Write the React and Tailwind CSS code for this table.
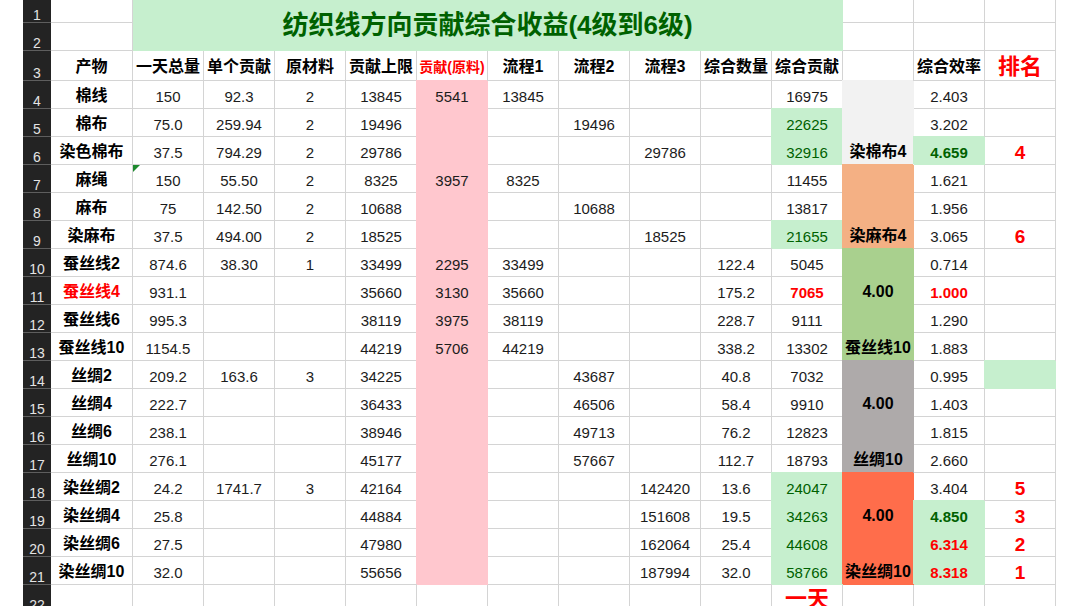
const fills = {
  pink: 'bg-[#ffc7ce] border-[#ffc7ce] shadow-[-1px_-1px_0_0_#ffc7ce]',
  good: 'bg-[#c6efce] border-[#c6efce] shadow-[-1px_-1px_0_0_#c6efce]',
  gray: 'bg-[#f2f2f2] border-[#f2f2f2] shadow-[-1px_-1px_0_0_#f2f2f2]',
  peach: 'bg-[#f4b084] border-[#f4b084] shadow-[-1px_-1px_0_0_#f4b084]',
  lime: 'bg-[#a9d08e] border-[#a9d08e] shadow-[-1px_-1px_0_0_#a9d08e]',
  stone: 'bg-[#aeaaaa] border-[#aeaaaa] shadow-[-1px_-1px_0_0_#aeaaaa]',
  coral: 'bg-[#ff6d4b] border-[#ff6d4b] shadow-[-1px_-1px_0_0_#ff6d4b]',
};

const styles = {
  num: 'text-[15px] text-[#1c1c1c]',
  name: 'text-[16px] font-bold text-black',
  head: 'text-[16px] font-bold text-black',
  redName: 'text-[16px] font-bold text-[#ff0000]',
  redHead: 'text-[14px] font-bold text-[#ff0000]',
  redBold: 'text-[15px] font-bold text-[#ff0000]',
  goodText: 'text-[15px] text-[#006100]',
  goodBold: 'text-[15px] font-bold text-[#006100]',
  bold: 'text-[16px] font-bold text-black',
  rank: 'text-[19px] font-bold text-[#ff0000]',
  rankHead: 'text-[22px] font-bold text-[#ff0000]',
};

// helpers for the cell shorthand
const G = (v) => ({ v, f: 'good', s: 'goodText' });
const B = (v) => ({ v, s: 'bold' });
const R = (v) => ({ v, s: 'rank' });

const header = [
  '产物', '一天总量', '单个贡献', '原材料', '贡献上限',
  { v: '贡献(原料)', s: 'redHead' },
  '流程1', '流程2', '流程3', '综合数量', '综合贡献', '', '综合效率',
  { v: '排名', s: 'rankHead' },
];

const rows = [
  ['棉线', '150', '92.3', '2', '13845', '5541', '13845', '', '', '', '16975', '', '2.403', ''],
  ['棉布', '75.0', '259.94', '2', '19496', '', '', '19496', '', '', G('22625'), '', '3.202', ''],
  ['染色棉布', '37.5', '794.29', '2', '29786', '', '', '', '29786', '', G('32916'), B('染棉布4'), { v: '4.659', f: 'good', s: 'goodBold' }, R('4')],
  ['麻绳', '150', '55.50', '2', '8325', '3957', '8325', '', '', '', '11455', '', '1.621', ''],
  ['麻布', '75', '142.50', '2', '10688', '', '', '10688', '', '', '13817', '', '1.956', ''],
  ['染麻布', '37.5', '494.00', '2', '18525', '', '', '', '18525', '', G('21655'), B('染麻布4'), '3.065', R('6')],
  ['蚕丝线2', '874.6', '38.30', '1', '33499', '2295', '33499', '', '', '122.4', '5045', '', '0.714', ''],
  [{ v: '蚕丝线4', s: 'redName' }, '931.1', '', '', '35660', '3130', '35660', '', '', '175.2', { v: '7065', s: 'redBold' }, B('4.00'), { v: '1.000', s: 'redBold' }, ''],
  ['蚕丝线6', '995.3', '', '', '38119', '3975', '38119', '', '', '228.7', '9111', '', '1.290', ''],
  ['蚕丝线10', '1154.5', '', '', '44219', '5706', '44219', '', '', '338.2', '13302', B('蚕丝线10'), '1.883', ''],
  ['丝绸2', '209.2', '163.6', '3', '34225', '', '', '43687', '', '40.8', '7032', '', '0.995', { v: '', f: 'good' }],
  ['丝绸4', '222.7', '', '', '36433', '', '', '46506', '', '58.4', '9910', B('4.00'), '1.403', ''],
  ['丝绸6', '238.1', '', '', '38946', '', '', '49713', '', '76.2', '12823', '', '1.815', ''],
  ['丝绸10', '276.1', '', '', '45177', '', '', '57667', '', '112.7', '18793', B('丝绸10'), '2.660', ''],
  ['染丝绸2', '24.2', '1741.7', '3', '42164', '', '', '', '142420', '13.6', G('24047'), '', '3.404', R('5')],
  ['染丝绸4', '25.8', '', '', '44884', '', '', '', '151608', '19.5', G('34263'), B('4.00'), { v: '4.850', f: 'good', s: 'goodBold' }, R('3')],
  ['染丝绸6', '27.5', '', '', '47980', '', '', '', '162064', '25.4', G('44608'), '', { v: '6.314', f: 'good', s: 'redBold' }, R('2')],
  ['染丝绸10', '32.0', '', '', '55656', '', '', '', '187994', '32.0', G('58766'), B('染丝绸10'), { v: '8.318', f: 'good', s: 'redBold' }, R('1')],
];

// fill of column L, by data row
const lFill = (i) => (i < 3 ? 'gray' : i < 6 ? 'peach' : i < 10 ? 'lime' : i < 14 ? 'stone' : 'coral');

function RowNum({ n }) {
  return (
    <div className="flex items-end justify-center bg-[#232323] border-b border-[#5e5e5e] text-[14px] leading-none text-[#e4e4e4]">
      {n}
    </div>
  );
}

function Cell({ item, fill, style, mark, top }) {
  const v = typeof item === 'object' ? item.v : item;
  const f = (typeof item === 'object' && item.f) || fill;
  const s = (typeof item === 'object' && item.s) || style;
  return (
    <div
      className={`${mark ? 'relative ' : ''}flex ${top ? 'items-start pt-[3px]' : 'items-center pt-[3px]'} justify-center whitespace-nowrap leading-none border-r border-b ${
        f ? fills[f] : 'border-[#d4d4d4]'
      } ${styles[s]}`}
    >
      {mark && (
        <span className="absolute left-0 top-0 w-0 h-0 border-t-[7px] border-r-[7px] border-t-[#1d8a2e] border-r-transparent" />
      )}
      {v}
    </div>
  );
}

export default function App() {
  return (
    <div className="w-[1080px] h-[606px] overflow-hidden bg-white pl-[23px] font-['Liberation_Sans','Noto_Sans_CJK_SC',sans-serif]">
      <div className="grid grid-cols-[28px_82px_repeat(13,71px)] grid-rows-[23px_28px_30px_repeat(19,28px)]">
        {/* rows 1-2 with the merged title */}
        <RowNum n={1} />
        <Cell item="" style="num" />
        <div className="col-span-10 row-span-2 flex items-center justify-center bg-[#c6efce] border-r border-b border-[#c6efce] text-[26px] font-bold leading-none text-[#006100] whitespace-nowrap">
          纺织线方向贡献综合收益(4级到6级)
        </div>
        <Cell item="" style="num" />
        <Cell item="" style="num" />
        <Cell item="" style="num" />
        <RowNum n={2} />
        <Cell item="" style="num" />
        <Cell item="" style="num" />
        <Cell item="" style="num" />
        <Cell item="" style="num" />

        {/* row 3 headers */}
        <RowNum n={3} />
        {header.map((h, c) => (
          <Cell key={c} item={h} style="head" />
        ))}

        {/* rows 4-21 */}
        {rows.map((row, i) => (
          <div key={i} className="contents">
            <RowNum n={i + 4} />
            {row.map((item, c) => (
              <Cell
                key={c}
                item={item}
                style={c === 0 ? 'name' : 'num'}
                fill={c === 5 ? 'pink' : c === 11 ? lFill(i) : undefined}
                mark={i === 3 && c === 1}
              />
            ))}
          </div>
        ))}

        {/* row 22 */}
        <RowNum n={22} />
        {Array.from({ length: 14 }).map((_, c) => (
          <Cell key={c} item={c === 10 ? '一天' : ''} style={c === 10 ? 'rankHead' : 'num'} top={c === 10} />
        ))}
      </div>
    </div>
  );
}
